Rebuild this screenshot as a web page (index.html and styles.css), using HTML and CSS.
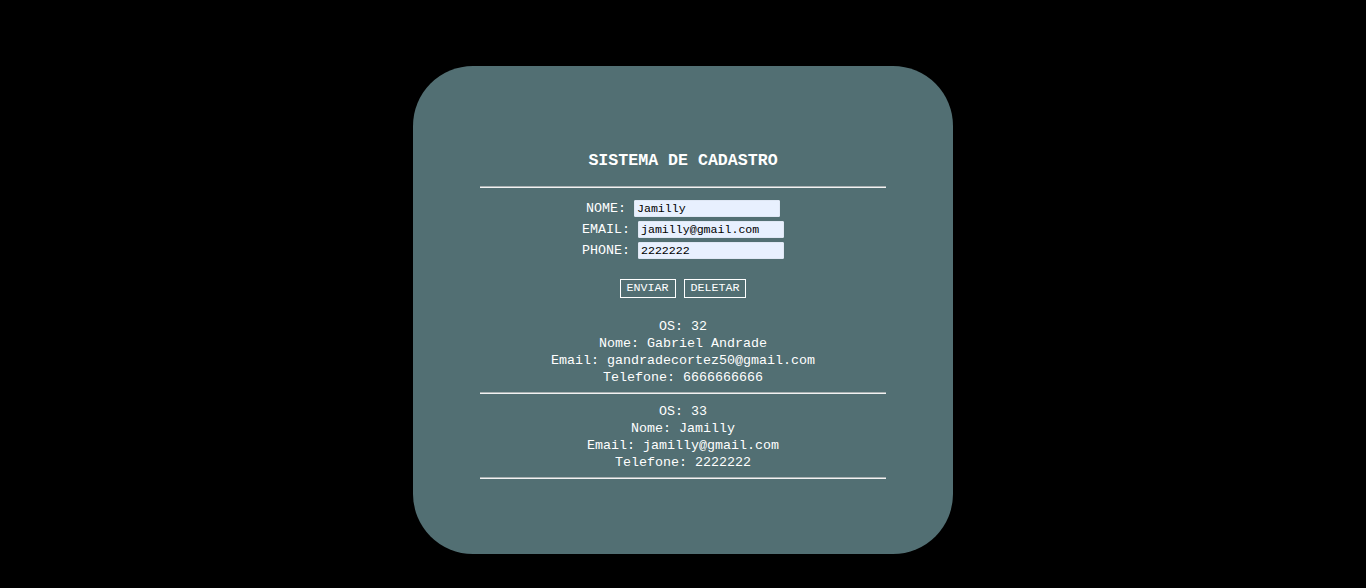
FILE: index.html
```html
<!DOCTYPE html>
<html lang="pt">
<head>
<meta charset="utf-8">
<title>Sistema de Cadastro</title>
<link rel="stylesheet" href="styles.css">
</head>
<body>
<main class="card">
  <h1 class="title">SISTEMA DE CADASTRO</h1>
  <hr class="rule">
  <form class="form">
    <div class="row"><label class="label">NOME:</label><input class="field" type="text" value="Jamilly"></div>
    <div class="row"><label class="label">EMAIL:</label><input class="field" type="text" value="jamilly@gmail.com"></div>
    <div class="row"><label class="label">PHONE:</label><input class="field" type="text" value="2222222"></div>
    <div class="actions">
      <button class="btn" type="button">ENVIAR</button>
      <button class="btn" type="button">DELETAR</button>
    </div>
  </form>
  <section class="list">
    <div class="record">
      <p class="line">OS: 32</p>
      <p class="line">Nome: Gabriel Andrade</p>
      <p class="line">Email: gandradecortez50@gmail.com</p>
      <p class="line">Telefone: 6666666666</p>
    </div>
    <hr class="rule rule-rec">
    <div class="record">
      <p class="line">OS: 33</p>
      <p class="line">Nome: Jamilly</p>
      <p class="line">Email: jamilly@gmail.com</p>
      <p class="line">Telefone: 2222222</p>
    </div>
    <hr class="rule rule-rec">
  </section>
</main>
</body>
</html>
```
FILE: styles.css
```css
html, body {
  margin: 0;
  padding: 0;
  background: #000;
}
body {
  font-family: "Courier New", "Liberation Mono", monospace;
  color: #fff;
  height: 588px;
  overflow: hidden;
}
.card {
  box-sizing: border-box;
  width: 540px;
  height: 488px;
  margin: 66px auto 0;
  background: #526f73;
  border-radius: 60px;
  padding-top: 85px;
  display: flex;
  flex-direction: column;
  align-items: center;
}
.title {
  margin: 0;
  font-size: 16.6px;
  line-height: 20px;
  font-weight: bold;
  text-align: center;
}
.rule {
  box-sizing: border-box;
  width: 406px;
  height: 2px;
  margin: 15px 0 0;
  border: 0;
  border-top: 1px solid #a9b1b2;
  border-bottom: 1px solid #f2f2f2;
}
.form {
  margin-top: 12px;
  display: flex;
  flex-direction: column;
  align-items: center;
  gap: 4px;
}
.row {
  display: flex;
  align-items: baseline;
  gap: 8px;
  height: 17px;
}
.label {
  font-size: 13.33px;
  line-height: 17px;
}
.field {
  box-sizing: border-box;
  width: 146px;
  height: 17px;
  margin: 0;
  padding: 0 2px;
  border: 1px solid #dfe7f4;
  border-radius: 1px;
  background: #e8f0fe;
  color: #000;
  font-family: "Courier New", "Liberation Mono", monospace;
  font-size: 11.6px;
  line-height: 15px;
}
.actions {
  margin-top: 16px;
  display: flex;
  gap: 8px;
}
.btn {
  box-sizing: border-box;
  height: 19px;
  margin: 0;
  padding: 0 6px;
  border: 1px solid #fff;
  background: transparent;
  color: #fff;
  font-family: "Courier New", "Liberation Mono", monospace;
  font-size: 11.67px;
  font-weight: normal;
  line-height: 17px;
}
.list {
  margin-top: 20px;
  display: flex;
  flex-direction: column;
  align-items: center;
}
.record {
  text-align: center;
}
.line {
  margin: 0;
  font-size: 13.33px;
  line-height: 17px;
  white-space: nowrap;
}
.rule-rec {
  margin: 6px 0 9px;
}
```
